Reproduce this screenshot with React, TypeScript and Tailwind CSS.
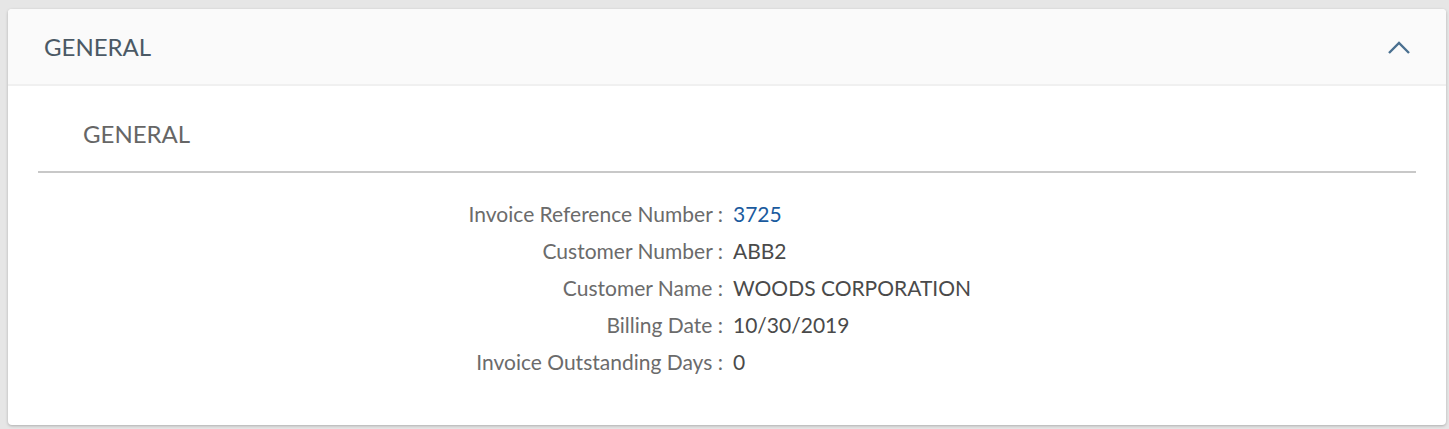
import React from 'react';

const ROWS: { label: string; value: string; link?: boolean }[] = [
  { label: 'Invoice Reference Number', value: '3725', link: true },
  { label: 'Customer Number', value: 'ABB2' },
  { label: 'Customer Name', value: 'WOODS CORPORATION' },
  { label: 'Billing Date', value: '10/30/2019' },
  { label: 'Invoice Outstanding Days', value: '0' },
];

const App: React.FC = () => {
  return (
    <div className="min-h-screen bg-[#e6e6e6] pt-[9px] pl-[8px] pr-[3px] font-['Lato','Open_Sans',sans-serif]">
      <div className="bg-white rounded-[4px] shadow-[0_1px_3px_rgba(0,0,0,0.25)] overflow-hidden">
        {/* Header */}
        <div className="h-[75px] bg-[#fafafa] border-b-2 border-[#f0f0f0] flex items-center justify-between pl-[36px] pr-[35px] box-content">
          <span className="text-[24px] text-[#4b5965]">GENERAL</span>
          <svg width="24" height="16" viewBox="0 0 24 16" className="text-[#4a7090]">
            <path d="M2 14 L12 4 L22 14" fill="none" stroke="currentColor" strokeWidth="2.4" />
          </svg>
        </div>

        {/* Body */}
        <div className="px-[30px] pb-[50px]">
          <div className="border-b-2 border-[#c8c8c8] pt-[35px] pb-[22px] pl-[45px]">
            <span className="text-[24px] text-[#666666] leading-[26px]">GENERAL</span>
          </div>
          <div className="pt-[27px] flex flex-col gap-[10px]">
            {ROWS.map((r) => (
              <div key={r.label} className="grid grid-cols-2 text-[21px] leading-[27px]">
                <div className="text-right text-[#6b6b6b] pr-[4px]">{r.label} :</div>
                <div className={`pl-[6px] ${r.link ? 'text-[#1a5a9e]' : 'text-[#4a4a4a]'}`}>{r.value}</div>
              </div>
            ))}
          </div>
        </div>
      </div>
    </div>
  );
};

export default App;
